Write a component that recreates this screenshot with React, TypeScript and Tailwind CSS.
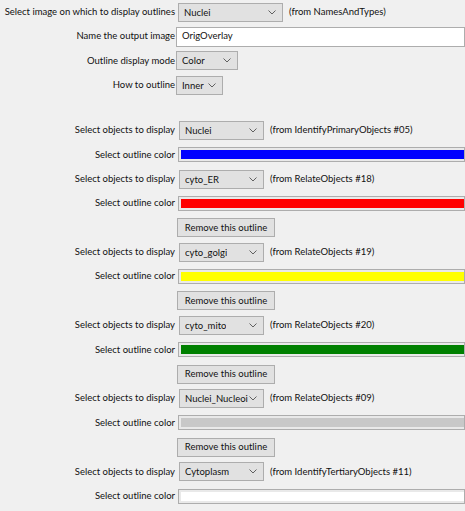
import React from 'react'

const font = { fontFamily: 'Lato, "Noto Sans", sans-serif' }

const Chevron: React.FC = () => (
  <svg width="8" height="5" viewBox="0 0 8 5" className="shrink-0">
    <path d="M0.5 0.5 L4 4 L7.5 0.5" fill="none" stroke="#606060" strokeWidth="1" />
  </svg>
)

const Dropdown: React.FC<{ value: string; width: string; className?: string }> = ({ value, width, className = '' }) => (
  <div
    className={`flex h-[19px] shrink-0 items-center justify-between border border-[#adadad] bg-[#e1e1e1] pl-[5px] pr-[6px] ${width} ${className}`}
  >
    <span className="overflow-hidden whitespace-nowrap leading-[15px]">{value}</span>
    <Chevron />
  </div>
)

const Row: React.FC<{ label?: string; children: React.ReactNode }> = ({ label, children }) => (
  <div className="flex h-[24.4px] items-center">
    <div className="w-[176px] shrink-0 whitespace-nowrap pr-[1px] text-right">{label}</div>
    <div className="flex min-w-0 flex-1 items-center">{children}</div>
  </div>
)

const ColorBar: React.FC<{ color: string }> = ({ color }) => (
  <div className="ml-[2px] h-[15px] flex-1 border border-[#adadad] bg-[#e9e9e9] p-[2px] pr-0">
    <div className={`h-full w-full ${color}`} />
  </div>
)

const RemoveButton: React.FC = () => (
  <Row>
    <div className="ml-[1px] flex h-[19px] w-[98px] shrink-0 items-center justify-center whitespace-nowrap border border-[#adadad] bg-[#e1e1e1]">
      Remove this outline
    </div>
  </Row>
)

const outlines = [
  { name: 'Nuclei', source: '(from IdentifyPrimaryObjects #05)', color: 'bg-[#0000ff]', removable: false },
  { name: 'cyto_ER', source: '(from RelateObjects #18)', color: 'bg-[#ff0000]', removable: true },
  { name: 'cyto_golgi', source: '(from RelateObjects #19)', color: 'bg-[#ffff00]', removable: true },
  { name: 'cyto_mito', source: '(from RelateObjects #20)', color: 'bg-[#008000]', removable: true },
  { name: 'Nuclei_Nucleoi', source: '(from RelateObjects #09)', color: 'bg-[#c8c8c8]', removable: true },
  { name: 'Cytoplasm', source: '(from IdentifyTertiaryObjects #11)', color: 'bg-white', removable: false },
]

const App: React.FC = () => {
  return (
    <div className="h-[511px] w-[465px] overflow-hidden bg-[#f0f0f0] text-[9.5px] text-[#111]" style={font}>
      <Row label="Select image on which to display outlines">
        <Dropdown value="Nuclei" width="w-[105px]" className="ml-[2px]" />
        <span className="ml-[6px] whitespace-nowrap">(from NamesAndTypes)</span>
      </Row>
      <Row label="Name the output image">
        <div className="flex h-[20px] flex-1 items-center border border-[#adadad] bg-white pl-[5px]">OrigOverlay</div>
      </Row>
      <Row label="Outline display mode">
        <Dropdown value="Color" width="w-[62px]" />
      </Row>
      <Row label="How to outline">
        <Dropdown value="Inner" width="w-[47px]" />
      </Row>

      <div className="h-[20.5px]" />

      {outlines.map((o) => (
        <React.Fragment key={o.name}>
          <Row label="Select objects to display">
            <Dropdown value={o.name} width="w-[85px]" className="ml-[3px]" />
            <span className="ml-[6px] whitespace-nowrap">{o.source}</span>
          </Row>
          <Row label="Select outline color">
            <ColorBar color={o.color} />
          </Row>
          {o.removable && <RemoveButton />}
        </React.Fragment>
      ))}
    </div>
  )
}

export default App
